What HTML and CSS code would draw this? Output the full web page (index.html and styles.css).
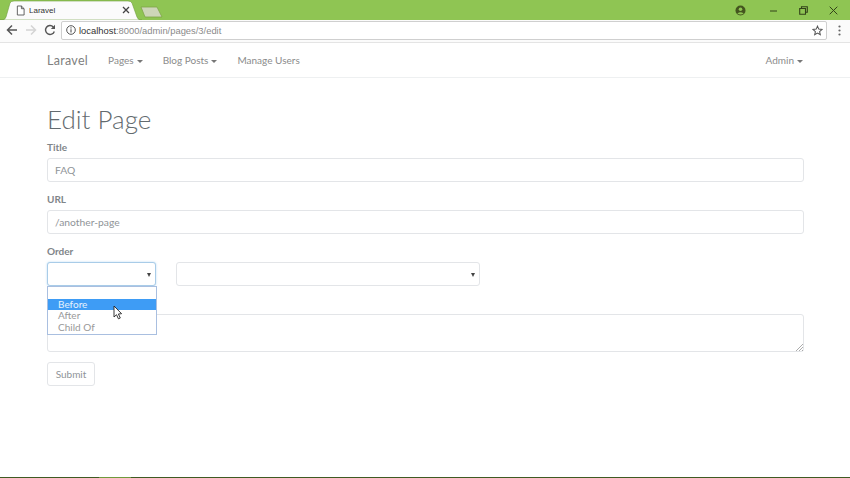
FILE: index.html
```html
<!DOCTYPE html>
<html lang="en">
<head>
<meta charset="utf-8">
<title>Laravel</title>
<link rel="stylesheet" href="styles.css">
</head>
<body>
<div class="tabstrip">
  <div class="tab">
    <svg class="tab-bg" width="142" height="20" viewBox="0 0 142 20"><path d="M0 20 L2 20 Q5 20 6 17 L10 3 Q11 1 14 1 L128 1 Q131 1 132 3 L137 17 Q138 20 141 20 L142 20 Z" fill="#fbfbfb" stroke="#6f9e3c" stroke-width="0.6"/></svg>
    <svg class="tab-favicon" width="9" height="11" viewBox="0 0 10 12"><path d="M1.500 1 H6 L9 4 V11 H1.500 Z M6 1 V4 H9" fill="#fff" stroke="#555" stroke-width="1"/></svg>
    <span class="tab-title">Laravel</span>
    <svg class="tab-close" width="8" height="8" viewBox="0 0 8 8"><path d="M1 1 L7 7 M7 1 L1 7" stroke="#444" stroke-width="1.300"/></svg>
  </div>
  <svg class="newtab" width="24" height="12" viewBox="0 0 24 12"><path d="M1 1 H17 L22 11 H5 Z" fill="#cdd6b8" stroke="#7ea548" stroke-width="0.800"/></svg>
  <div class="winctl">
    <svg class="win-profile" width="11" height="11" viewBox="0 0 11 11"><circle cx="5.500" cy="5.500" r="5" fill="#44551f"/><circle cx="5.500" cy="4.200" r="1.800" fill="#8fc553"/><path d="M2.400 8.600 Q5.500 5.800 8.600 8.600 Q5.500 10.400 2.400 8.600 Z" fill="#8fc553"/></svg>
    <svg class="win-min" width="9" height="9" viewBox="0 0 9 9"><path d="M1 5 H8" stroke="#33421a" stroke-width="1"/></svg>
    <svg class="win-max" width="9" height="9" viewBox="0 0 9 9"><path d="M2.500 2.500 V.7 H8.300 V6.300 H6.500 M.7 2.500 H6.500 V8.300 H.7 Z" fill="none" stroke="#33421a" stroke-width="1.100"/></svg>
    <svg class="win-close" width="9" height="9" viewBox="0 0 9 9"><path d="M.7 .7 L8.300 8.300 M8.300 .7 L.7 8.300" stroke="#33421a" stroke-width="1"/></svg>
  </div>
</div>
<div class="toolbar">
  <svg class="tb-icon" width="12" height="12" viewBox="0 0 12 12"><path d="M11 6 H2 M6 1.500 L1.500 6 L6 10.500" fill="none" stroke="#555" stroke-width="1.500"/></svg>
  <svg class="tb-icon" width="12" height="12" viewBox="0 0 12 12"><path d="M1 6 H10 M6 1.500 L10.500 6 L6 10.500" fill="none" stroke="#d4d4d4" stroke-width="1.500"/></svg>
  <svg class="tb-icon" width="12" height="12" viewBox="0 0 12 12"><path d="M10.300 7.500 A4.500 4.500 0 1 1 9.300 2.900" fill="none" stroke="#555" stroke-width="1.400"/><path d="M11 .8 V5 H6.800 Z" fill="#555"/></svg>
  <div class="omnibox">
    <svg class="info" width="10" height="10" viewBox="0 0 10 10"><circle cx="5" cy="5" r="4.300" fill="none" stroke="#555" stroke-width="1"/><path d="M5 4.300 V7.600 M5 2.300 V3.400" stroke="#555" stroke-width="1.100"/></svg>
    <span class="url-host">localhost</span><span class="url-rest">:8000/admin/pages/3/edit</span>
    <svg class="star" width="11" height="11" viewBox="0 0 12 12"><path d="M6 1.200 L7.400 4.500 L11 4.800 L8.300 7.200 L9.100 10.700 L6 8.900 L2.900 10.700 L3.700 7.200 L1 4.800 L4.600 4.500 Z" fill="none" stroke="#555" stroke-width="1.100"/></svg>
  </div>
  <svg class="kebab" width="3" height="11" viewBox="0 0 3 11"><circle cx="1.500" cy="1.500" r="1.100" fill="#666"/><circle cx="1.500" cy="5.500" r="1.100" fill="#666"/><circle cx="1.500" cy="9.500" r="1.100" fill="#666"/></svg>
</div>
<nav class="navbar">
  <span class="brand">Laravel</span>
  <span class="nav-item">Pages<i class="caret"></i></span>
  <span class="nav-item">Blog Posts<i class="caret"></i></span>
  <span class="nav-item">Manage Users</span>
  <span class="nav-item nav-right">Admin<i class="caret"></i></span>
</nav>
<main class="page">
  <h1 class="title">Edit Page</h1>
  <div class="field">
    <label class="label">Title</label>
    <div class="control">FAQ</div>
  </div>
  <div class="field">
    <label class="label">URL</label>
    <div class="control">/another-page</div>
  </div>
  <div class="field">
    <label class="label">Order</label>
    <div class="select-row">
      <div class="select-wrap">
        <div class="control select focused"><i class="arrow"></i></div>
        <div class="dropdown">
          <div class="opt-search"></div>
          <div class="opt active">Before</div>
          <div class="opt">After</div>
          <div class="opt">Child Of</div>
        </div>
        <svg class="cursor" width="10" height="15" viewBox="0 0 10 15"><path d="M1 1 V12 L3.500 9.700 L5.400 13.800 L7.300 13 L5.400 9 L8.600 8.700 Z" fill="#fff" stroke="#222" stroke-width="0.900"/></svg>
      </div>
      <div class="control select wide"><i class="arrow"></i></div>
    </div>
  </div>
  <div class="control textarea">
    <svg class="grip" width="7" height="7" viewBox="0 0 7 7"><path d="M0 7 L7 0 M3 7 L7 3 M6 7 L7 6" stroke="#888" stroke-width="0.700"/></svg>
  </div>
  <button class="submit" type="button">Submit</button>
</main>
<div class="taskbar"><span class="taskbar-active"></span></div>
</body>
</html>
```
FILE: styles.css
```css
* { box-sizing: border-box; }
html, body { margin: 0; padding: 0; }
body {
  width: 850px;
  height: 478px;
  overflow: hidden;
  position: relative;
  background: #fff;
  font-family: "Lato", "Open Sans", sans-serif;
  color: #636b6f;
}
.tabstrip {
  height: 20px;
  background: #8fc553;
  display: flex;
  align-items: flex-end;
  position: relative;
}
.tab {
  position: relative;
  width: 142px;
  height: 20px;
  display: flex;
  align-items: center;
  padding-left: 16px;
  flex: none;
}
.tab-bg { position: absolute; left: 0; top: 0; }
.tab-favicon, .tab-title, .tab-close { position: relative; }
.tab-title {
  font-family: "Liberation Sans", sans-serif;
  font-size: 8px;
  color: #333;
  margin-left: 4px;
  flex: 1;
}
.tab-close { margin-right: 12px; }
.newtab { margin: 0 0 2px -2px; }
.winctl {
  margin-left: auto;
  height: 20px;
  display: flex;
  align-items: center;
}
.win-profile { margin-right: 23px; }
.win-min { margin-right: 21px; }
.win-max { margin-right: 21px; }
.win-close { margin-right: 12px; }
.toolbar {
  height: 23px;
  background: #fbfbfb;
  border-bottom: 1px solid #e4e4e4;
  display: flex;
  align-items: center;
  padding: 0 9px 2px 6px;
}
.tb-icon { margin-right: 7px; flex: none; }
.omnibox {
  flex: 1;
  height: 19px;
  margin-left: -2px;
  margin-right: 11px;
  background: #fff;
  border: 1px solid #cfcfcf;
  border-radius: 2px;
  display: flex;
  align-items: center;
  padding: 0 3px 0 4px;
  font-family: "Liberation Sans", sans-serif;
  font-size: 9.400px;
}
.info { margin-right: 3px; }
.url-host { color: #333; }
.url-rest { color: #8a8a8a; }
.star { margin-left: auto; }
.navbar {
  height: 35px;
  background: #fff;
  border-bottom: 1px solid #eef0f1;
  display: flex;
  align-items: center;
  padding: 0 47px;
  font-size: 10px;
  color: #8b8b8b;
}
.brand { font-size: 12.500px; color: #808080; margin-right: 20px; letter-spacing: .3px; }
.nav-item { margin-right: 20px; }
.nav-right { margin-left: auto; margin-right: 0; }
.caret {
  display: inline-block;
  margin-left: 3px;
  vertical-align: middle;
  border-top: 3px solid #777;
  border-left: 3px solid transparent;
  border-right: 3px solid transparent;
}
.page { padding: 0 46px 0 47px; }
.title {
  margin: 0;
  padding-top: 25px;
  height: 64px;
  font-size: 26px;
  line-height: 32px;
  font-weight: 300;
  color: #636b6f;
}
.field { margin-bottom: 12px; }
.label {
  display: block;
  font-size: 10px;
  font-weight: 700;
  height: 16px;
  line-height: 10px;
  color: #808589;
}
.control {
  height: 24px;
  background: #fff;
  border: 1px solid #e3e5e8;
  border-radius: 3px;
  padding: 0 7px;
  font-size: 10.300px;
  line-height: 22px;
  color: #8f9498;
}
.select-row { display: flex; gap: 20px; height: 24px; }
.select-wrap { position: relative; width: 109px; z-index: 1; }
.select { position: relative; }
.wide { width: 304px; }
.focused { border-color: #a9cce8; box-shadow: 0 0 2px rgba(102,175,233,.5); }
.arrow {
  position: absolute;
  right: 4px;
  top: 10px;
  border-top: 4px solid #444;
  border-left: 2px solid transparent;
  border-right: 2px solid transparent;
}
.dropdown {
  position: absolute;
  top: 24px;
  left: 0;
  width: 110px;
  height: 49px;
  background: #fff;
  border: 1px solid #a9bfe0;
  font-size: 10px;
  line-height: 11px;
  color: #999;
}
.opt-search { height: 11.500px; }
.opt { height: 11.500px; padding-left: 10px; }
.active { background: #3e9cf5; color: #e6f2fd; }
.cursor { position: absolute; left: 66px; top: 43px; }
.textarea {
  height: 38px;
  margin-top: 28px;
  margin-bottom: 10px;
  position: relative;
}
.grip { position: absolute; right: 0; bottom: 0; }
.submit {
  display: block;
  width: 48px;
  height: 24px;
  padding: 0;
  background: #fff;
  border: 1px solid #e3e5e8;
  border-radius: 3px;
  font-family: inherit;
  font-size: 10px;
  color: #8f9498;
}
.taskbar {
  position: absolute;
  left: 0;
  right: 0;
  bottom: 0;
  height: 1px;
  background: #3f5a22;
}
.taskbar-active {
  position: absolute;
  left: 99px;
  width: 32px;
  height: 1px;
  background: #6f9a3c;
}
```
